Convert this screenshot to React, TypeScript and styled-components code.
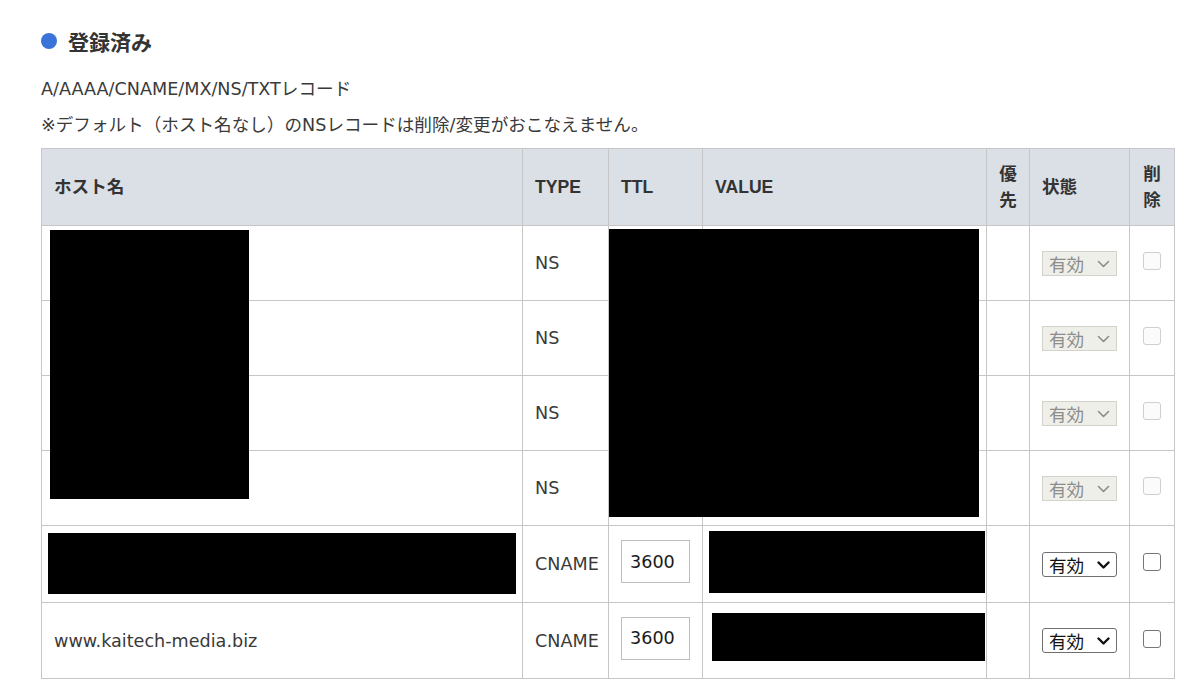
import React from "react";
import styled, { createGlobalStyle, css } from "styled-components";

const Global = createGlobalStyle`
  html, body { margin: 0; padding: 0; background: #ffffff; }
  body { font-family: "DejaVu Sans", "Noto Sans CJK JP", sans-serif; color: #3a3a3a; }
`;

const Page = styled.div`
  padding: 26px 24px 0 41px;
`;

const Heading = styled.h2`
  display: flex;
  align-items: center;
  gap: 11px;
  margin: 0 0 15px 0;
  height: 30px;
  font-family: "Noto Sans CJK JP", sans-serif;
  font-size: 21px;
  font-weight: 700;
  color: #333333;
`;

const Dot = styled.span`
  width: 16px;
  height: 16px;
  border-radius: 50%;
  background: #3a74d8;
  flex: none;
`;

const Note = styled.p`
  margin: 0;
  line-height: 36px;
  font-size: 17.6px;
  color: #3a3a3a;
`;

const TableWrap = styled.div`
  position: relative;
  margin-top: 5px;
  width: 1133px;
`;

const Table = styled.table`
  border-collapse: collapse;
  table-layout: fixed;
  width: 1133px;
  font-size: 17.6px;
`;

const Th = styled.th<{ $center?: boolean }>`
  background: #dbdfe6;
  border: 1px solid #c6c6c6;
  height: 76px;
  padding: 0 12px;
  text-align: ${(p) => (p.$center ? "center" : "left")};
  font-family: "Liberation Sans", "Noto Sans CJK JP", sans-serif;
  font-weight: 700;
  font-size: 17.6px;
  line-height: 26px;
  color: #333333;
  ${(p) =>
    p.$center &&
    css`
      padding: 0;
    `}
`;

const Td = styled.td<{ $h: number }>`
  border: 1px solid #c6c6c6;
  height: ${(p) => p.$h}px;
  padding: 0 12px;
  vertical-align: middle;
  color: #3a3a3a;
  white-space: nowrap;
  line-height: 24px;
`;

const TtlInput = styled.input`
  box-sizing: border-box;
  width: 69px;
  height: 43px;
  border: 1px solid #bdbdbd;
  border-radius: 0;
  padding: 0 0 0 8px;
  margin: 0 0 5px 0;
  vertical-align: middle;
  font-family: "DejaVu Sans", sans-serif;
  font-size: 17.6px;
  color: #1a1a1a;
  background: #ffffff;
  outline: none;
`;

const SelectBox = styled.span`
  position: relative;
  display: inline-block;
  vertical-align: middle;
  height: 25px;
`;

const Select = styled.select<{ disabled?: boolean }>`
  appearance: none;
  -webkit-appearance: none;
  box-sizing: border-box;
  width: 75px;
  height: 25px;
  margin: 0;
  padding: 0 0 0 6px;
  font-family: "Noto Sans CJK JP", sans-serif;
  font-size: 17.6px;
  line-height: 23px;
  border-radius: ${(p) => (p.disabled ? "0" : "3px")};
  border: 1px solid ${(p) => (p.disabled ? "#d3d3cc" : "#6f6f6f")};
  background: ${(p) => (p.disabled ? "#efefe9" : "#ffffff")};
  color: ${(p) => (p.disabled ? "#8c8c8c" : "#111111")};
  opacity: 1;
`;

const Chevron = styled.svg<{ $disabled?: boolean }>`
  position: absolute;
  right: 7px;
  top: 9px;
  width: 13px;
  height: 8px;
  pointer-events: none;
  stroke: ${(p) => (p.$disabled ? "#8c8c8c" : "#111111")};
  stroke-width: ${(p) => (p.$disabled ? 1.6 : 2.4)};
`;

const Check = styled.input`
  appearance: none;
  -webkit-appearance: none;
  box-sizing: border-box;
  width: 18px;
  height: 18px;
  margin: 0 0 5px 1px;
  vertical-align: middle;
  border-radius: 3px;
  border: 1.5px solid #777777;
  background: #ffffff;
  &:disabled {
    border-color: #cfcfcf;
    background: #fbfbfb;
  }
`;

const Redact = styled.div`
  position: absolute;
  background: #000000;
`;

type Row = {
  host: string;
  type: string;
  ttl?: string;
  locked: boolean;
  h: number;
};

const rows: Row[] = [
  { host: "", type: "NS", locked: true, h: 74 },
  { host: "", type: "NS", locked: true, h: 74 },
  { host: "", type: "NS", locked: true, h: 74 },
  { host: "", type: "NS", locked: true, h: 74 },
  { host: "", type: "CNAME", ttl: "3600", locked: false, h: 76 },
  { host: "www.kaitech-media.biz", type: "CNAME", ttl: "3600", locked: false, h: 75 },
];

const redactions = [
  { left: 9, top: 82, width: 199, height: 269 },
  { left: 568, top: 81, width: 370, height: 288 },
  { left: 7, top: 385, width: 468, height: 61 },
  { left: 668, top: 383, width: 276, height: 62 },
  { left: 671, top: 465, width: 273, height: 48 },
];

function StateSelect({ disabled }: { disabled: boolean }) {
  return (
    <SelectBox>
      <Select disabled={disabled} defaultValue="on">
        <option value="on">有効</option>
        <option value="off">無効</option>
      </Select>
      <Chevron $disabled={disabled} viewBox="0 0 13 8" fill="none" strokeLinecap="round" strokeLinejoin="round">
        <path d="M1.5 1.5 L6.5 6.5 L11.5 1.5" />
      </Chevron>
    </SelectBox>
  );
}

export default function App() {
  return (
    <Page>
      <Global />
      <Heading>
        <Dot />
        登録済み
      </Heading>
      <Note>A/AAAA/CNAME/MX/NS/TXTレコード</Note>
      <Note>※デフォルト（ホスト名なし）のNSレコードは削除/変更がおこなえません。</Note>
      <TableWrap>
        <Table>
          <colgroup>
            <col style={{ width: 481 }} />
            <col style={{ width: 86 }} />
            <col style={{ width: 94 }} />
            <col style={{ width: 284 }} />
            <col style={{ width: 43 }} />
            <col style={{ width: 100 }} />
            <col style={{ width: 45 }} />
          </colgroup>
          <thead>
            <tr>
              <Th>ホスト名</Th>
              <Th>TYPE</Th>
              <Th>TTL</Th>
              <Th>VALUE</Th>
              <Th $center>
                優<br />先
              </Th>
              <Th>状態</Th>
              <Th $center>
                削<br />除
              </Th>
            </tr>
          </thead>
          <tbody>
            {rows.map((r, i) => (
              <tr key={i}>
                <Td $h={r.h}>{r.host}</Td>
                <Td $h={r.h}>{r.type}</Td>
                <Td $h={r.h}>{r.ttl ? <TtlInput defaultValue={r.ttl} /> : null}</Td>
                <Td $h={r.h} />
                <Td $h={r.h} />
                <Td $h={r.h}>
                  <StateSelect disabled={r.locked} />
                </Td>
                <Td $h={r.h}>
                  <Check type="checkbox" disabled={r.locked} />
                </Td>
              </tr>
            ))}
          </tbody>
        </Table>
        {redactions.map((b, i) => (
          <Redact key={i} style={{ left: b.left, top: b.top, width: b.width, height: b.height }} />
        ))}
      </TableWrap>
    </Page>
  );
}
